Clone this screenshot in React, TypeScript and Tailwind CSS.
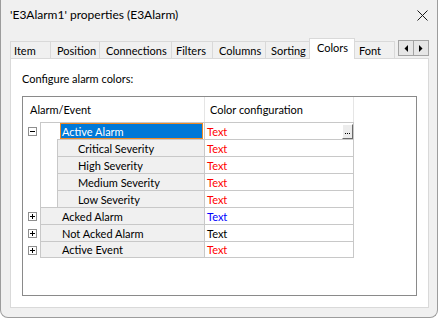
import React from "react";

type Row = {
  label: string;
  level: 0 | 1;
  expander?: "plus" | "minus";
  selected?: boolean;
  color: string;
  button?: boolean;
};

const rows: Row[] = [
  { label: "Active Alarm", level: 0, expander: "minus", selected: true, color: "text-[#ff0000]", button: true },
  { label: "Critical Severity", level: 1, color: "text-[#ff0000]" },
  { label: "High Severity", level: 1, color: "text-[#ff0000]" },
  { label: "Medium Severity", level: 1, color: "text-[#ff0000]" },
  { label: "Low Severity", level: 1, color: "text-[#ff0000]" },
  { label: "Acked Alarm", level: 0, expander: "plus", color: "text-[#0000ff]" },
  { label: "Not Acked Alarm", level: 0, expander: "plus", color: "text-black" },
  { label: "Active Event", level: 0, expander: "plus", color: "text-[#ff0000]" },
];

// tabs: width includes left border, pl puts the label where the dialog draws it
const tabs = [
  { label: "Item", w: "w-[40px]", pl: "pl-[3px]" },
  { label: "Position", w: "w-[49px]", pl: "pl-[6px]" },
  { label: "Connections", w: "w-[72px]", pl: "pl-[6px]" },
  { label: "Filters", w: "w-[41px]", pl: "pl-[4px]" },
  { label: "Columns", w: "w-[53px]", pl: "pl-[6px]" },
  { label: "Sorting", w: "w-[44px]", pl: "pl-[5px]" },
];

function Expander({ kind }: { kind: "plus" | "minus" }) {
  return (
    <svg width="9" height="9" viewBox="0 0 9 9" className="block">
      <rect x="0.5" y="0.5" width="8" height="8" fill="#fff" stroke="#8e8e8e" />
      <line x1="2" y1="4.5" x2="7" y2="4.5" stroke="#000" />
      {kind === "plus" && <line x1="4.5" y1="2" x2="4.5" y2="7" stroke="#000" />}
    </svg>
  );
}

function TreeRow({ row, last }: { row: Row; last: boolean }) {
  const bb = last ? "border-b" : "";
  return (
    <div className="flex">
      {/* expander gutter */}
      <div className="flex h-[17px] w-[17px] items-center pl-[5px] pt-px">
        {row.expander && <Expander kind={row.expander} />}
      </div>

      {row.level === 1 ? (
        <>
          <div className={`w-[17px] border-l border-[#c8c8c8] bg-white ${bb}`} />
          <div className={`flex h-[17px] w-[147px] items-center border-l border-t border-[#c8c8c8] bg-[#f0f0f0] pl-[20px] ${bb}`}>
            {row.label}
          </div>
        </>
      ) : row.selected ? (
        <div className={`flex h-[17px] w-[164px] border-l border-t border-[#c8c8c8] bg-white ${bb}`}>
          <div className="w-[19px]" />
          <div className="flex flex-1 items-center border border-[#f08a24] bg-[#0078d7] pl-px text-white">
            {row.label}
          </div>
          <div className="w-px" />
        </div>
      ) : (
        <div className={`flex h-[17px] w-[164px] items-center border-l border-t border-[#c8c8c8] bg-[#f0f0f0] pl-[21px] ${bb}`}>
          {row.label}
        </div>
      )}

      <div className={`flex h-[17px] w-[150px] items-center justify-between border-x border-t border-[#c8c8c8] bg-white pl-[2px] ${row.color} ${bb}`}>
        <span>Text</span>
        {row.button && (
          <div className="flex h-[15px] w-[11px] items-end justify-center gap-px border border-b-[#6b6b6b] border-l-white border-r-[#6b6b6b] border-t-white bg-[#ececec] pb-[4px]">
            <span className="h-px w-px bg-black" />
            <span className="h-px w-px bg-black" />
            <span className="h-px w-px bg-black" />
          </div>
        )}
      </div>
    </div>
  );
}

export default function App() {
  return (
    <div className="h-[318px] w-[438px] overflow-hidden rounded-b-[8px] border-x border-b border-[#9c9c9c] bg-[#f0f0f0] font-['Lato',sans-serif] text-[11px] leading-none text-black">
      {/* --- TITLE BAR --- */}
      <div className="flex h-[30px] items-center justify-between pl-[9px] pr-[9px]">
        <span className="text-[12px]">'E3Alarm1' properties (E3Alarm)</span>
        <svg width="11" height="11" viewBox="0 0 11 11" className="mt-px">
          <path d="M0.5 0.5 L10.5 10.5 M10.5 0.5 L0.5 10.5" stroke="#1a1a1a" strokeWidth="1" />
        </svg>
      </div>

      {/* --- TAB STRIP --- */}
      <div className="ml-[9px] mt-[8px] flex h-[20px] items-end">
        {tabs.map((t) => (
          <div
            key={t.label}
            className={`flex h-[17px] items-center border-l border-t border-[#d9d9d9] bg-[#f0f0f0] ${t.w} ${t.pl}`}
          >
            {t.label}
          </div>
        ))}
        <div className="relative z-10 -mb-px flex h-[21px] w-[46px] items-center border-x border-t border-[#d9d9d9] bg-white pb-[4px] pl-[7px]">
          Colors
        </div>
        <div className="flex h-[17px] w-[40px] items-center border-r border-t border-[#d9d9d9] bg-[#f0f0f0] pl-[4px]">
          Font
        </div>
        <div className="mb-[2px] ml-[3px] flex h-[16px]">
          <div className="flex w-[16px] items-center justify-center border border-[#a3a3a3] bg-[#e6e6e6]">
            <svg width="4" height="7" viewBox="0 0 4 7">
              <path d="M4 0 L0.5 3.5 L4 7 Z" fill="#000" />
            </svg>
          </div>
          <div className="-ml-px flex w-[16px] items-center justify-center border border-[#a3a3a3] bg-[#e6e6e6]">
            <svg width="4" height="7" viewBox="0 0 4 7">
              <path d="M0 0 L3.5 3.5 L0 7 Z" fill="#000" />
            </svg>
          </div>
        </div>
      </div>

      {/* --- PAGE --- */}
      <div className="ml-[9px] h-[250px] w-[419px] border border-[#d9d9d9] bg-white">
        <div className="ml-[11px] mt-[11px] flex h-[16px] items-center">Configure alarm colors:</div>

        <div className="ml-[11px] mt-[10px] h-[200px] w-[395px] border border-[#8a8a8a] bg-white">
          {/* header */}
          <div className="flex h-[25px]">
            <div className="flex w-[181px] items-center pl-[7px]">Alarm/Event</div>
            <div className="flex w-[150px] items-center border-x border-[#e5e5e5] pl-[5px]">
              Color configuration
            </div>
          </div>

          {rows.map((r, i) => (
            <TreeRow key={r.label} row={r} last={i === rows.length - 1} />
          ))}
        </div>
      </div>
    </div>
  );
}
